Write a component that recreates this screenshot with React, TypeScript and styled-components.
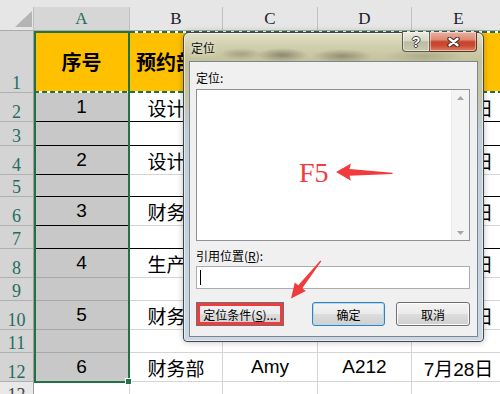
import React from "react";
import styled, { createGlobalStyle } from "styled-components";

const GlobalStyle = createGlobalStyle`
  html, body { margin: 0; padding: 0; }
  body { background: #fff; font-family: "Liberation Sans", "Noto Sans CJK SC", sans-serif; }
`;

const GREEN = "#217346";
const RED = "#f03c3c";
const GRID = "#d4d4d4";
const YELLOW = "#ffc000";
const SHADE = "#c8c8c8";
const UI_FONT = `"Noto Sans CJK SC", "Liberation Sans", sans-serif`;

type Row = { n: number; h: number; vals?: string[] };

// C and D are hidden behind the dialog for rows 1-10
const ROWS: Row[] = [
  { n: 1, h: 62, vals: ["序号", "预约部门", "", "", ""] },
  { n: 2, h: 29, vals: ["1", "设计部", "", "", "7月25日"] },
  { n: 3, h: 24 },
  { n: 4, h: 29, vals: ["2", "设计部", "", "", "7月26日"] },
  { n: 5, h: 22 },
  { n: 6, h: 29, vals: ["3", "财务部", "", "", "7月26日"] },
  { n: 7, h: 23 },
  { n: 8, h: 29, vals: ["4", "生产部", "", "", "7月27日"] },
  { n: 9, h: 23 },
  { n: 10, h: 29, vals: ["5", "财务部", "", "", "7月27日"] },
  { n: 11, h: 23 },
  { n: 12, h: 29, vals: ["6", "财务部", "Amy", "A212", "7月28日"] },
  { n: 13, h: 23 },
];

const LETTERS = ["A", "B", "C", "D", "E"];

const Stage = styled.div`
  position: relative;
  width: 500px;
  height: 394px;
  overflow: hidden;
  box-sizing: border-box;
  padding-top: 7px;
  background: #e6e6e6;
`;

const Sheet = styled.div`
  display: grid;
  grid-template-columns: 34px 96px 93px 95px 94px 94px;
  grid-template-rows: 24px ${ROWS.map((r) => r.h + "px").join(" ")};
`;

const Corner = styled.div`
  position: relative;
  box-sizing: border-box;
  background: #e6e6e6;
  border-right: 1px solid #c0c0c0;
  border-bottom: 1px solid #ababab;

  &::after {
    content: "";
    position: absolute;
    right: 1px;
    bottom: 3px;
    width: 17px;
    height: 16px;
    background: #b4b4b4;
    clip-path: polygon(100% 0, 100% 100%, 0 100%);
  }
`;

const ColHead = styled.div<{ $on?: boolean }>`
  box-sizing: border-box;
  display: flex;
  align-items: center;
  justify-content: center;
  background: ${(p) => (p.$on ? "#d6d6d6" : "#e6e6e6")};
  color: ${(p) => (p.$on ? "#1f6e5e" : "#1c1c2c")};
  border-right: 1px solid #c0c0c0;
  border-bottom: 1px solid #ababab;
  font-family: "Liberation Serif", serif;
  font-size: 17px;
`;

const RowHead = styled.div<{ $on?: boolean }>`
  box-sizing: border-box;
  display: flex;
  align-items: flex-end;
  justify-content: center;
  background: ${(p) => (p.$on ? "#d4d4d4" : "#e9e9e9")};
  color: ${(p) => (p.$on ? "#1f6e5e" : "#444")};
  border-right: 1px solid #9e9e9e;
  border-bottom: 1px solid #b0b0b0;
  font-family: "Liberation Serif", serif;
  font-size: 18px;
  line-height: 18px;
`;

const Cell = styled.div<{ $fill: string; $bottom: string; $right: string; $bold?: boolean }>`
  box-sizing: border-box;
  display: flex;
  align-items: center;
  justify-content: center;
  overflow: hidden;
  white-space: nowrap;
  background: ${(p) => p.$fill};
  border-right: 1px solid ${(p) => p.$right};
  border-bottom: 1px solid ${(p) => p.$bottom};
  font-family: "Liberation Sans", "Noto Sans CJK SC", sans-serif;
  font-size: ${(p) => (p.$bold ? 20 : 19)}px;
  font-weight: ${(p) => (p.$bold ? 700 : 400)};
  color: #000;
`;

const Selection = styled.div`
  position: absolute;
  left: 34px;
  top: 31px;
  width: 96px;
  height: 352px;
  box-sizing: border-box;
  border: 2px solid ${GREEN};
  pointer-events: none;

  &::after {
    content: "";
    position: absolute;
    right: -4px;
    bottom: -4px;
    width: 5px;
    height: 5px;
    background: ${GREEN};
    border: 1px solid #fff;
  }
`;

const dash = (dir: string) => `repeating-linear-gradient(${dir}, ${GREEN} 0 5px, #fff 5px 8px)`;

const Marquee = styled.div`
  position: absolute;
  left: 34px;
  top: 31px;
  width: 480px;
  height: 62px;
  pointer-events: none;
  background:
    ${dash("90deg")} left top / 100% 2px no-repeat,
    ${dash("90deg")} left bottom / 100% 2px no-repeat,
    ${dash("180deg")} left top / 2px 100% no-repeat,
    ${dash("180deg")} 94px top / 2px 100% no-repeat;
`;

/* ---------- dialog ---------- */

const Dialog = styled.div`
  position: absolute;
  left: 183px;
  top: 32px;
  width: 301px;
  height: 310px;
  box-sizing: border-box;
  display: flex;
  flex-direction: column;
  padding: 0 5px 4px 5px;
  border: 1px solid #3f474d;
  border-radius: 6px 6px 4px 4px;
  background:
    radial-gradient(ellipse 22px 6px at 57px 21px, rgba(90, 90, 70, 0.35), transparent),
    radial-gradient(ellipse 26px 7px at 98px 22px, rgba(60, 60, 45, 0.45), transparent),
    radial-gradient(ellipse 30px 7px at 158px 23px, rgba(60, 60, 45, 0.4), transparent),
    radial-gradient(ellipse 40px 7px at 240px 23px, rgba(110, 110, 80, 0.3), transparent),
    linear-gradient(180deg, #e2e1c9 0, #d2d0ae 12px, #c4c29c 28px, #c5c4a6 60px, #c0ccd6 95px, #cbd7e2 100%);
  box-shadow: inset 0 0 0 1px rgba(255, 255, 255, 0.55), 0 0 6px rgba(0, 0, 0, 0.25);
`;

const TitleBar = styled.div`
  height: 28px;
  display: flex;
  align-items: center;
`;

const Title = styled.span`
  margin-left: 2px;
  font-family: ${UI_FONT};
  font-size: 12px;
  color: #111;
  text-shadow: 0 0 5px rgba(255, 255, 255, 0.9);
`;

const CaptionGroup = styled.div`
  margin-left: auto;
  margin-right: 1px;
  align-self: flex-start;
  margin-top: -1px;
  display: flex;
  height: 20px;
`;

const CaptionButton = styled.div<{ $close?: boolean }>`
  box-sizing: border-box;
  width: ${(p) => (p.$close ? 47 : 28)}px;
  height: 20px;
  display: flex;
  align-items: center;
  justify-content: center;
  border: 1px solid ${(p) => (p.$close ? "#5b3128" : "#5d5d50")};
  border-top: none;
  border-radius: ${(p) => (p.$close ? "0 0 4px 0" : "0 0 0 4px")};
  ${(p) => (p.$close ? "border-left: none;" : "")}
  background: ${(p) =>
    p.$close
      ? "linear-gradient(180deg, #eab0a2 0, #dc8a74 40%, #c8432a 52%, #c94b32 72%, #dd8366 100%)"
      : "linear-gradient(180deg, #ecebdf 0, #d9d8c6 45%, #bcbba2 52%, #c9c8b2 100%)"};
  box-shadow: inset 0 0 0 1px rgba(255, 255, 255, 0.45);
`;

const HelpGlyph = styled.span`
  font-family: "Liberation Sans", sans-serif;
  font-weight: 700;
  font-size: 14px;
  line-height: 1;
  color: #fff;
  text-shadow: 1px 0 #3d3d3d, -1px 0 #3d3d3d, 0 1px #3d3d3d, 0 -1px #3d3d3d;
`;

const Client = styled.div`
  flex: 1;
  display: flex;
  flex-direction: column;
  padding: 8px 7px 0 6px;
  border: 1px solid #7b8692;
  background: #f0f0f0;
  font-family: ${UI_FONT};
  font-size: 12px;
  color: #000;
`;

const Label = styled.div<{ $gap: number }>`
  margin-top: ${(p) => p.$gap}px;
  line-height: 16px;
  height: 16px;
`;

const ListBox = styled.div`
  margin-top: 3px;
  height: 152px;
  box-sizing: border-box;
  display: flex;
  justify-content: flex-end;
  border: 1px solid #8e9298;
  background: #fff;
`;

const ScrollBar = styled.div`
  width: 17px;
  display: flex;
  flex-direction: column;
  justify-content: space-between;
  align-items: center;
  background: #f4f4f4;
  border-left: 1px solid #ececec;
  padding: 6px 0 5px;
`;

const TextBox = styled.div`
  margin-top: 2px;
  height: 23px;
  box-sizing: border-box;
  border: 1px solid #abadb3;
  background: #fff;
  display: flex;
  align-items: center;
  padding-left: 3px;

  &::before {
    content: "";
    width: 1px;
    height: 15px;
    background: #000;
  }
`;

const ButtonRow = styled.div`
  margin-top: 13px;
  height: 24px;
  display: flex;
`;

const Button = styled.div<{ $w: number; $kind?: "marked" | "default"; $left?: string }>`
  box-sizing: border-box;
  width: ${(p) => p.$w}px;
  height: 24px;
  margin-left: ${(p) => p.$left ?? "0"};
  display: flex;
  align-items: center;
  justify-content: center;
  border-radius: ${(p) => (p.$kind === "marked" ? "0" : "3px")};
  border: 1px solid ${(p) => (p.$kind === "default" ? "#3c7fb1" : "#707070")};
  background: linear-gradient(180deg, #f3f3f3 0, #ebebeb 48%, #dddddd 52%, #cfcfcf 100%);
  box-shadow: ${(p) =>
    p.$kind === "marked"
      ? `inset 0 0 0 3px ${RED}`
      : p.$kind === "default"
      ? "inset 0 0 0 1px #a9dcf6"
      : "inset 0 0 0 1px #fbfbfb"};
`;

const U = styled.span`
  text-decoration: underline;
`;

const F5 = styled.div`
  position: absolute;
  left: 299px;
  top: 159px;
  font-family: "Liberation Serif", serif;
  font-size: 28px;
  line-height: 1;
  color: ${RED};
  pointer-events: none;
`;

const Marks = styled.svg`
  position: absolute;
  left: 0;
  top: 0;
  pointer-events: none;
`;

function Arrow({ down }: { down?: boolean }) {
  return (
    <svg width="7" height="4" viewBox="0 0 7 4">
      <path d={down ? "M0 0 H7 L3.5 4 Z" : "M0 4 H7 L3.5 0 Z"} fill="#a6a6a6" />
    </svg>
  );
}

function cellStyle(n: number, col: number) {
  if (n === 1) return { fill: YELLOW, bottom: GRID, right: YELLOW };
  if (n === 13) return { fill: "#fff", bottom: GRID, right: GRID };
  if (col === 0) return { fill: SHADE, bottom: n <= 7 ? "#000" : "#a8a8a8", right: SHADE };
  const black = n === 2 || n === 3 || n === 5 || n === 7;
  return { fill: "#fff", bottom: black ? "#000" : GRID, right: GRID };
}

export default function App() {
  return (
    <>
      <GlobalStyle />
      <Stage>
        <Sheet>
          <Corner />
          {LETTERS.map((l, i) => (
            <ColHead key={l} $on={i === 0}>
              {l}
            </ColHead>
          ))}
          {ROWS.map((r) => (
            <React.Fragment key={r.n}>
              <RowHead $on={r.n <= 12}>{r.n}</RowHead>
              {LETTERS.map((l, c) => {
                const s = cellStyle(r.n, c);
                return (
                  <Cell key={l} $fill={s.fill} $bottom={s.bottom} $right={s.right} $bold={r.n === 1}>
                    {r.vals ? r.vals[c] : ""}
                  </Cell>
                );
              })}
            </React.Fragment>
          ))}
        </Sheet>

        <Marquee />
        <Selection />

        <Dialog>
          <TitleBar>
            <Title>定位</Title>
            <CaptionGroup>
              <CaptionButton>
                <HelpGlyph>?</HelpGlyph>
              </CaptionButton>
              <CaptionButton $close>
                <svg width="13" height="10" viewBox="0 0 13 10">
                  <path d="M2.5 1.8 L10.5 8.2 M10.5 1.8 L2.5 8.2" stroke="#3e2a24" strokeWidth="4.4" strokeLinecap="round" />
                  <path d="M2.5 1.8 L10.5 8.2 M10.5 1.8 L2.5 8.2" stroke="#fff" strokeWidth="2.4" strokeLinecap="round" />
                </svg>
              </CaptionButton>
            </CaptionGroup>
          </TitleBar>

          <Client>
            <Label $gap={0}>定位:</Label>
            <ListBox>
              <ScrollBar>
                <Arrow />
                <Arrow down />
              </ScrollBar>
            </ListBox>
            <Label $gap={7}>
              引用位置(<U>R</U>):
            </Label>
            <TextBox />
            <ButtonRow>
              <Button $w={88} $kind="marked">
                定位条件(<U>S</U>)...
              </Button>
              <Button $w={73} $kind="default" $left="auto">
                确定
              </Button>
              <Button $w={74} $left="11px">
                取消
              </Button>
            </ButtonRow>
          </Client>
        </Dialog>

        <F5>F5</F5>
        <Marks width="500" height="394" viewBox="0 0 500 394">
          <polygon
            points="336,172 351,163.5 349.5,169 392.5,172.7 392.5,174 349.5,175.7 351,180.8"
            fill={RED}
          />
          <polygon
            points="291,298.5 294.8,282.4 298.3,285.2 320.3,260.4 321.3,261.2 302.3,288.2 305.8,291"
            fill={RED}
          />
        </Marks>
      </Stage>
    </>
  );
}
